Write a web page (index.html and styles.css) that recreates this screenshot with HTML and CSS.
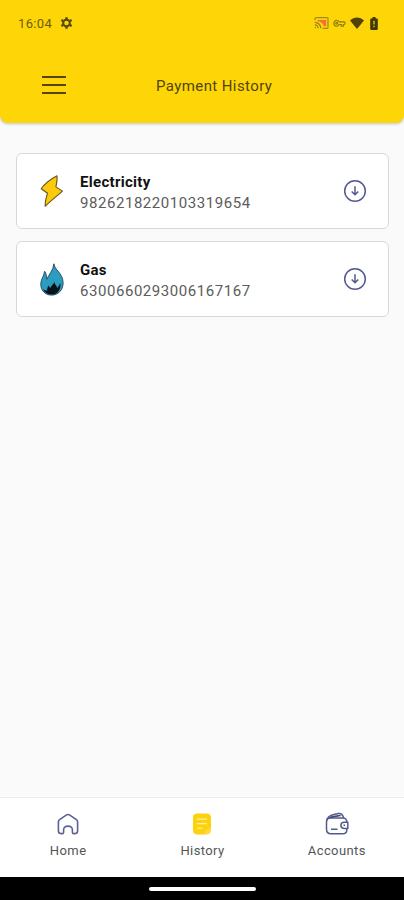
FILE: index.html
```html
<!DOCTYPE html>
<html lang="en">
<head>
<meta charset="UTF-8" />
<meta name="viewport" content="width=device-width, initial-scale=1" />
<title>Payment History</title>
<link rel="stylesheet" href="styles.css">
</head>
<body>

<header class="header">
  <div class="status-bar">
    <span class="time">16:04</span>
    <svg class="gear" width="13" height="14" viewBox="0 0 14 14">
      <circle cx="7" cy="7" r="3.6" fill="none" stroke="#55480a" stroke-width="2.2" />
      <path d="M7 .7v2M7 11.3v2M1.5 3.8l1.8 1M10.7 9.2l1.8 1M1.5 10.2l1.8-1M10.7 4.8l1.8-1" stroke="#55480a" stroke-width="2.6" />
    </svg>
    <div class="status-icons">
      <svg width="15" height="12" viewBox="0 0 15 12" fill="none">
        <path d="M1 3.2V1.6C1 1 1.4.7 2 .7h11c.6 0 1 .3 1 .9v8.8c0 .6-.4.9-1 .9H8.5" stroke="#a08a1c" stroke-width="1.2" />
        <path d="M3.5 3h8.7v6.2H9.8C9.3 6.400 6.800 4.600 3.500 4.300z" fill="#fb6b3d" />
        <path d="M.8 5.300c3.500 0 5.900 2.500 5.900 6M.8 7.900c2 0 3.300 1.400 3.300 3.400M.8 10.600h1.100" stroke="#92801c" stroke-width="1.2" />
      </svg>
      <svg width="13" height="9" viewBox="0 0 14 9" fill="none" stroke="#8b7710" stroke-width="1.2">
        <path d="M6.600 2.800C6 1.500 5 1 3.900 1 2.200 1 1 2.400 1 4.300s1.200 3.200 2.900 3.200c1.300 0 2.300-.7 2.800-1.900h2.200v1.900h2.200V5.600c1.500 0 2-.6 2-1.500s-.6-1.300-1.500-1.300z" />
        <circle cx="4" cy="4.300" r="1" />
      </svg>
      <svg width="14" height="12" viewBox="0 0 14 12">
        <path d="M0 3.500C4-.6 10-.6 14 3.500L7 12z" fill="#4f4309" />
      </svg>
      <svg width="8" height="13" viewBox="0 0 8 13">
        <path d="M2.500 0h3v1.400H7c.5 0 .8.300.8.800v9.900c0 .5-.3.800-.8.800H1c-.5 0-.8-.3-.8-.8V2.200c0-.5.3-.8.8-.8h1.500z" fill="#40370a" />
        <path d="M4 3.800v3.700M4 8.700v1.600" stroke="#d8b60a" stroke-width="1.5" />
      </svg>
    </div>
  </div>
  <div class="title-bar">
    <button class="menu-button" aria-label="Menu">
      <span></span>
      <span></span>
      <span></span>
    </button>
    <h1>Payment History</h1>
  </div>
</header>

<main class="list">
  <div class="card">
    <svg class="card-icon" width="24" height="34" viewBox="0 0 24 34">
      <path d="M17 1.800C11 5 5.500 8.500 1.200 14.800l6.300 4.400C6.200 23.500 4.900 28 5.200 32.300c5-5 10.600-9.300 17.300-15.200l-6.600-4.200c.8-3.700 1.500-7.400 1.100-11.100z" fill="#fbcb0b" stroke="#66561d" stroke-width="1.100" stroke-linejoin="round" />
    </svg>
    <div class="card-text">
      <h2>Electricity</h2>
      <p>9826218220103319654</p>
    </div>
    <button class="download" aria-label="Download">
      <svg width="24" height="24" viewBox="0 0 24 24" fill="none" stroke="#52598f" stroke-width="1.500">
        <circle cx="12" cy="12" r="10.300" />
        <path d="M12 7.200v8.600M8.700 12.500l3.300 3.300 3.300-3.300" />
      </svg>
    </button>
  </div>

  <div class="card">
    <svg class="card-icon" width="24" height="34" viewBox="0 0 24 34">
      <path d="M13.900 1.800c.3 6.200 9.200 9.200 9.200 19.200 0 7-5 12.100-11.500 12.100C5.200 33.100.8 28.600.8 22.300c0-5.500 3.200-7.600 3.800-13 1.600 1.900 1.900 4.800 2.200 8 2.200-5.100 6.500-8.700 7.100-15.500z" fill="#2d9cc1" stroke="#245061" stroke-width="1" />
      <path d="M14.300 19.700c.2 3 2.600 3.500 2.700 6.200 1.500-1.400 2.500-2.900 3.300-5 1.200 6.500-3.200 11.700-8.500 11.700-4.300 0-7.400-2-9-5.500 1.900 1.400 3.100 1.600 4.400 1.400-.3-2.400.8-3.600 1.400-5.200.5 1.600 1.100 1.900 1.700 2.600.5-2.100 3.700-3.700 4-6.200z" fill="#06131a" />
    </svg>
    <div class="card-text">
      <h2>Gas</h2>
      <p>6300660293006167167</p>
    </div>
    <button class="download" aria-label="Download">
      <svg width="24" height="24" viewBox="0 0 24 24" fill="none" stroke="#52598f" stroke-width="1.500">
        <circle cx="12" cy="12" r="10.300" />
        <path d="M12 7.200v8.600M8.700 12.500l3.300 3.300 3.300-3.300" />
      </svg>
    </button>
  </div>
</main>

<nav class="tabs">
  <a class="tab">
    <svg width="24" height="24" viewBox="0 0 24 24" fill="none" stroke="#5a6296" stroke-width="1.600" stroke-linejoin="round">
      <path d="M2.400 10.100c0-1 .4-1.900 1.200-2.500l6.200-4.300c1.300-.9 3.100-.9 4.400 0l6.200 4.300c.8.600 1.200 1.500 1.200 2.500v9c0 1.600-.9 2.500-2.500 2.500h-1.300c-.9 0-1.400-.5-1.400-1.400v-2.500c0-2.200-1.600-3.600-4.400-3.600s-4.400 1.400-4.400 3.600v2.500c0 .9-.5 1.400-1.400 1.400H4.900c-1.600 0-2.500-.9-2.500-2.500z" />
    </svg>
    <span>Home</span>
  </a>
  <a class="tab">
    <svg width="24" height="24" viewBox="0 0 24 24">
      <path d="M7 1.500h9.500c2.900 0 4.500 1.500 4.500 4.300v10.100l-6.200 6.600H7c-2.700 0-4-1.500-4-4.200V5.800C3 3 4.300 1.500 7 1.500z" fill="#fdd20c" />
      <path d="M14.800 22.500c-.2-4.400 1.500-6.300 6.200-6.600v2.400c0 2.700-1.600 4.200-4.500 4.200z" fill="#fddb3c" />
      <path d="M7.500 7.200h9M7.500 11.700h9M7.500 16.200h4.500" stroke="#fff0a3" stroke-width="1.300" stroke-linecap="round" />
    </svg>
    <span>History</span>
  </a>
  <a class="tab">
    <svg width="24" height="24" viewBox="0 0 24 24" fill="none" stroke="#535b8b" stroke-width="1.500" stroke-linejoin="round">
      <path d="M21.800 10.300V9.800c0-2.400-1.500-3.800-4-3.800H5.500c-2.500 0-4 1.600-4 4.100v7.200c0 2.900 1.600 4.500 4.500 4.500h11.400c2.900 0 4.400-1.400 4.400-3.900v-1.300" />
      <path d="M1.700 8.600C2.400 4.400 5 3.600 8 2.800l5.300-1.200c2.500-.5 4.400.8 5.300 4.400" />
      <path d="M3.400 6.400 6 4.200l8.500-1.400 2 1.200L6 6z" fill="#3f487c" stroke="none" />
      <path d="M22.800 10.200h-3.600c-2.100 0-3.300 1.200-3.300 3.100s1.200 3.100 3.300 3.100h3.600zM18.500 13.300h1.600M6 17.300h6.500" />
    </svg>
    <span>Accounts</span>
  </a>
</nav>

<div class="gesture-bar">
  <span></span>
</div>

</body>
</html>
```

FILE: styles.css
```css
* {
  box-sizing: border-box;
}
body {
  margin: 0; font-family: Roboto, sans-serif; background: #fafafa; color: #111;
  display: flex; flex-direction: column; height: 100vh;
  overflow: hidden;
}
h1, h2, p {
  margin: 0;
}
button {
  border: 0; padding: 0; background: none; cursor: pointer;
}
svg {
  display: block; flex: none;
}

/* Header */
.header {
  height: 123px; background: #fed507;
  border-radius: 0 0 8px 8px;
  box-shadow: 0 1px 3px rgba(60, 60, 90, 0.3);
}
.status-bar {
  display: flex; align-items: center; height: 46px;
  padding: 0 26px 0 18px;
}
.time {
  width: 42px; font-size: 13px; letter-spacing: 0.35px; color: #6d5c0b;
}
.status-icons {
  display: flex; align-items: center; gap: 4px; margin-left: auto;
}
.status-icons svg:last-child {
  margin-left: 2px;
}
.title-bar {
  display: flex; align-items: center; height: 77px; padding: 0 42px;
}
.menu-button {
  display: flex; flex-direction: column; gap: 6px; width: 24px;
}
.menu-button span {
  height: 2px; background: #51450c;
}
.title-bar h1 {
  margin: 2px 0 0 90px;
  font-size: 15px; font-weight: 400; line-height: 20px; letter-spacing: 0.4px; color: #51450c;
}

/* Bills */
.list {
  flex: 1; display: flex; flex-direction: column; gap: 12px;
  padding: 30px 15px 0 16px;
}
.card {
  display: flex; align-items: center; height: 76px;
  padding: 0 21px 0 23px;
  background: white; border: 1px solid #d9d9d9; border-radius: 6px;
}
.card-text {
  flex: 1; margin: 3px 0 0 16px;
}
.card-text h2 {
  font-size: 15px; font-weight: 700; line-height: 21px; letter-spacing: 0.3px; color: #111;
}
.card-text p {
  font-size: 15px; font-weight: 400; line-height: 21px; letter-spacing: 0.55px; color: #5c5c5c;
}

/* Bottom tabs */
.tabs {
  display: flex; height: 80px; padding-left: 1px;
  background: white; border-top: 1px solid #ececec;
}
.tab {
  flex: 1; display: flex; flex-direction: column; align-items: center;
  gap: 7px; padding-top: 14px;
}
.tab span {
  font-size: 13px; line-height: 16px; letter-spacing: 0.4px; color: #555;
}
.gesture-bar {
  display: flex; align-items: center; justify-content: center;
  height: 23px; background: black;
}
.gesture-bar span {
  width: 107px; height: 4px; border-radius: 2px; background: white;
}
```
